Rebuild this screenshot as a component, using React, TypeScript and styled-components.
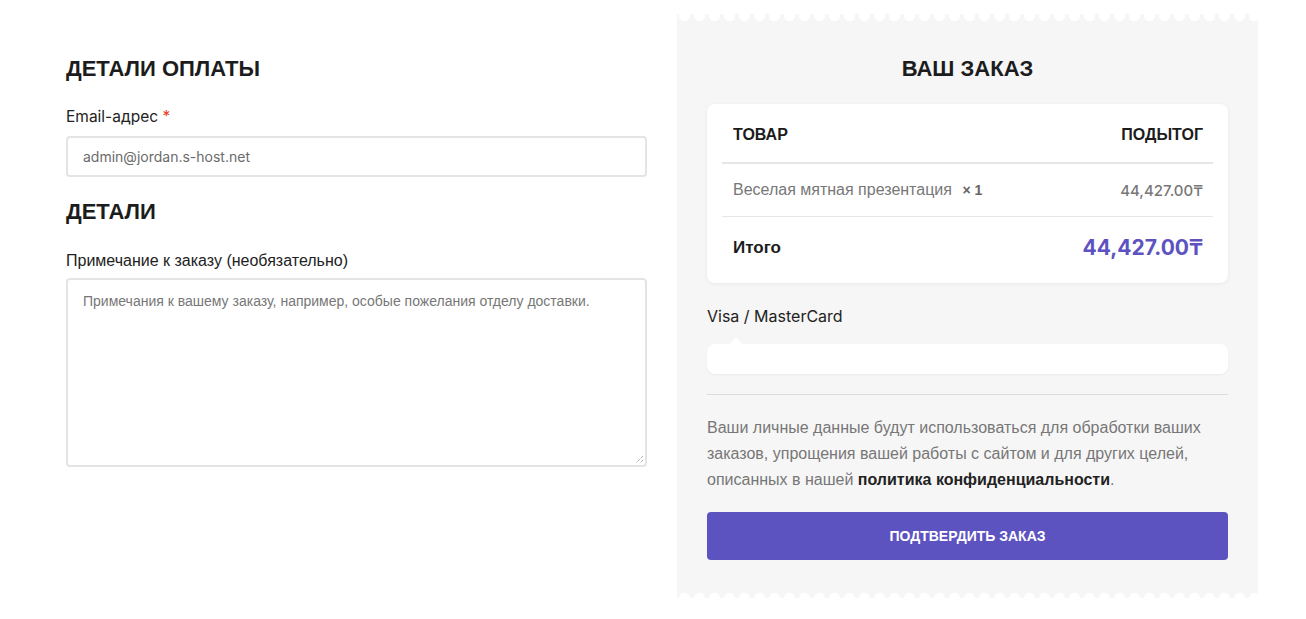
import React from "react";
import styled, { createGlobalStyle } from "styled-components";

const Global = createGlobalStyle`
  html, body { margin: 0; padding: 0; background: #ffffff; }
  body { font-family: "Liberation Sans", Arial, sans-serif; color: #222; }
  * { box-sizing: border-box; }
`;

const GEO = `"Inter", "Noto Sans", sans-serif`;
const PURPLE = "#5d53c0";

const Page = styled.div`
  display: grid;
  grid-template-columns: 581px 581px;
  column-gap: 30px;
  padding: 14px 0 0 66px;
  width: 1306px;
  height: 619px;
  overflow: hidden;
`;

const Column = styled.div`
  display: flex;
  flex-direction: column;
  padding-top: 41px;
`;

const Heading = styled.h3<{ $center?: boolean }>`
  margin: 0;
  font-family: "Liberation Sans", Arial, sans-serif;
  font-weight: 700;
  font-size: 22px;
  line-height: 28px;
  color: #1c1c1c;
  text-transform: uppercase;
  text-align: ${(p) => (p.$center ? "center" : "left")};
`;

const Field = styled.div<{ $mt: number }>`
  display: flex;
  flex-direction: column;
  margin-top: ${(p) => p.$mt}px;
`;

const Label = styled.label<{ $geo?: boolean }>`
  font-family: ${(p) => (p.$geo ? GEO : `"Liberation Sans", Arial, sans-serif`)};
  font-size: ${(p) => (p.$geo ? "15.5px" : "16px")};
  line-height: 20px;
  color: #222;
  margin-bottom: ${(p) => (p.$geo ? 9 : 7)}px;
`;

const Req = styled.span`
  color: #e2401c;
`;

const Input = styled.div`
  height: 41px;
  border: 2px solid #e4e4e4;
  border-radius: 4px;
  padding: 0 15px;
  display: flex;
  align-items: center;
  font-family: ${GEO};
  font-size: 14px;
  color: #6b6b6b;
`;

const TextArea = styled.div`
  position: relative;
  height: 189px;
  border: 2px solid #e4e4e4;
  border-radius: 4px;
  padding: 12px 15px;
  font-family: "Liberation Sans", Arial, sans-serif;
  font-size: 14px;
  line-height: 18px;
  color: #777;
`;

const Grip = styled.svg`
  position: absolute;
  right: 1px;
  bottom: 1px;
`;

const Panel = styled.div`
  position: relative;
  background: #f6f6f6;
  height: 584px;
  padding: 41px 30px 0;
  display: flex;
  flex-direction: column;

  &::before,
  &::after {
    content: "";
    position: absolute;
    left: 0;
    right: 0;
    height: 12px;
    background-image: radial-gradient(circle at 7.5px 6px, #ffffff 5px, transparent 5.6px);
    background-size: 15px 12px;
    background-repeat: repeat-x;
  }
  &::before { top: -4px; }
  &::after { bottom: -6px; }
`;

const Card = styled.div`
  margin-top: 21px;
  background: #fff;
  border-radius: 8px;
  box-shadow: 0 1px 4px rgba(0, 0, 0, 0.06);
  padding: 0 15px;
`;

const Row = styled.div<{ $h: number; $line?: number; $shift?: number }>`
  display: flex;
  align-items: center;
  justify-content: space-between;
  height: ${(p) => p.$h}px;
  padding: 0 10px 0 11px;
  ${(p) => (p.$shift ? `padding-${p.$shift > 0 ? "top" : "bottom"}: ${Math.abs(p.$shift)}px;` : "")}
  border-bottom: ${(p) => (p.$line ? `${p.$line}px solid #e6e6e6` : "none")};
`;

const HeadCell = styled.span`
  font-family: "Liberation Sans", Arial, sans-serif;
  font-weight: 700;
  font-size: 16px;
  color: #1c1c1c;
  text-transform: uppercase;
`;

const ItemName = styled.span`
  font-family: "Liberation Sans", Arial, sans-serif;
  font-size: 16px;
  color: #777;
`;

const Qty = styled.strong`
  font-size: 14px;
  margin-left: 6px;
  color: #666;
`;

const Price = styled.span<{ $total?: boolean }>`
  font-family: ${GEO};
  font-size: ${(p) => (p.$total ? "21px" : "15px")};
  font-weight: ${(p) => (p.$total ? 700 : 500)};
  color: ${(p) => (p.$total ? PURPLE : "#777")};
`;

const TotalLabel = styled.span`
  font-family: "Liberation Sans", Arial, sans-serif;
  font-weight: 700;
  font-size: 17px;
  color: #1c1c1c;
`;

const Method = styled.div`
  margin-top: 23px;
  font-family: ${GEO};
  font-size: 16px;
  line-height: 20px;
  color: #222;
`;

const MethodBox = styled.div`
  position: relative;
  margin-top: 18px;
  height: 30px;
  background: #fff;
  border-radius: 8px;
  box-shadow: 0 1px 2px rgba(0, 0, 0, 0.05);

  &::before {
    content: "";
    position: absolute;
    left: 23px;
    top: -6px;
    border-left: 6px solid transparent;
    border-right: 6px solid transparent;
    border-bottom: 6px solid #fff;
  }
`;

const Divider = styled.hr`
  margin: 20px 0 0;
  border: none;
  border-top: 1px solid #dcdcdc;
`;

const Privacy = styled.p`
  margin: 20px 0 0;
  font-family: "Liberation Sans", Arial, sans-serif;
  font-size: 16px;
  line-height: 26px;
  color: #777;

  b { color: #222; }
`;

const Button = styled.button`
  margin-top: 19px;
  height: 48px;
  border: none;
  border-radius: 4px;
  background: ${PURPLE};
  color: #fff;
  font-family: "Liberation Sans", Arial, sans-serif;
  font-weight: 700;
  font-size: 14px;
  text-transform: uppercase;
  cursor: pointer;
`;

export default function App() {
  return (
    <>
      <Global />
      <Page>
        <Column>
          <Heading>Детали оплаты</Heading>
          <Field $mt={24}>
            <Label $geo>
              Email-адрес <Req>*</Req>
            </Label>
            <Input>admin@jordan.s-host.net</Input>
          </Field>
          <Field $mt={21}>
            <Heading>Детали</Heading>
          </Field>
          <Field $mt={25}>
            <Label>Примечание к заказу (необязательно)</Label>
            <TextArea>
              Примечания к вашему заказу, например, особые пожелания отделу доставки.
              <Grip width="10" height="10" viewBox="0 0 10 10">
                <path d="M9 2 L2 9 M9 6 L6 9" stroke="#888" strokeWidth="1" strokeDasharray="1 1" />
              </Grip>
            </TextArea>
          </Field>
        </Column>
        <Panel>
          <Heading $center>Ваш заказ</Heading>
          <Card>
            <Row $h={60} $line={2} $shift={3}>
              <HeadCell>Товар</HeadCell>
              <HeadCell>Подытог</HeadCell>
            </Row>
            <Row $h={53} $line={1}>
              <ItemName>
                Веселая мятная презентация <Qty>× 1</Qty>
              </ItemName>
              <Price>44,427.00₸</Price>
            </Row>
            <Row $h={66} $shift={-5}>
              <TotalLabel>Итого</TotalLabel>
              <Price $total>44,427.00₸</Price>
            </Row>
          </Card>
          <Method>Visa / MasterCard</Method>
          <MethodBox />
          <Divider />
          <Privacy>
            Ваши личные данные будут использоваться для обработки ваших заказов, упрощения вашей
            работы с сайтом и для других целей, описанных в нашей <b>политика конфиденциальности</b>.
          </Privacy>
          <Button>Подтвердить заказ</Button>
        </Panel>
      </Page>
    </>
  );
}
